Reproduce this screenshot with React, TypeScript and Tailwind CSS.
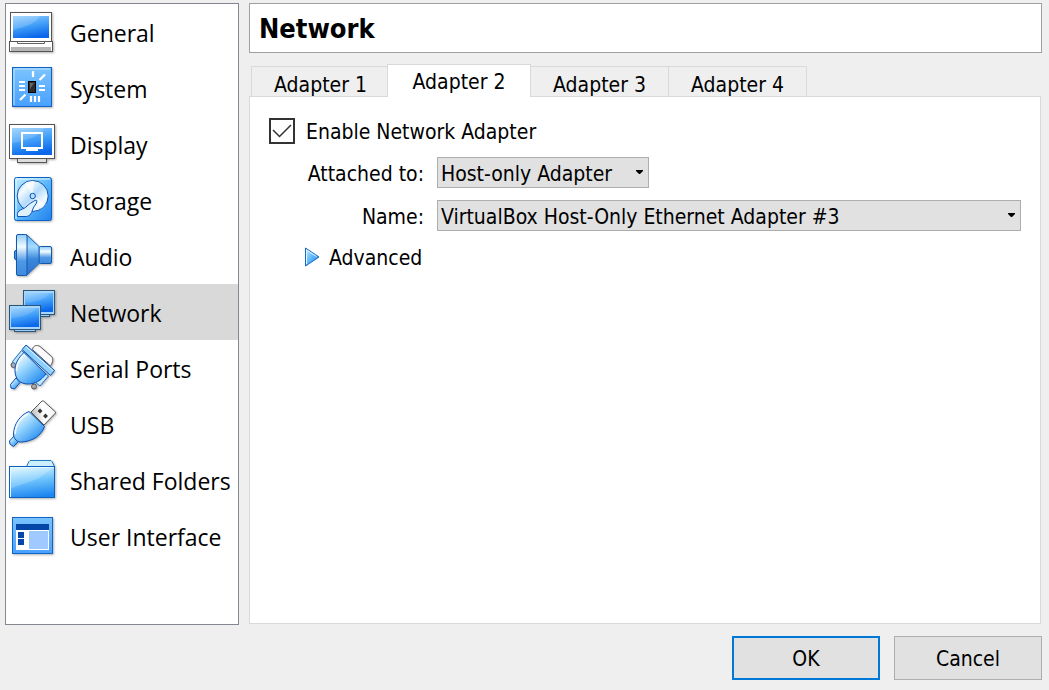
import { useState, type ReactNode } from "react";

function Gradients() {
  return (
    <svg className="absolute h-0 w-0" aria-hidden="true">
      <defs>
        <linearGradient id="screen" x1="0.2" y1="0" x2="0.5" y2="1">
          <stop offset="0" stopColor="#8ccafd" />
          <stop offset="0.5" stopColor="#3f9df8" />
          <stop offset="1" stopColor="#0a66ea" />
        </linearGradient>
        <linearGradient id="panel" x1="0" y1="0" x2="0" y2="1">
          <stop offset="0" stopColor="#7cc4ff" />
          <stop offset="1" stopColor="#49a0ff" />
        </linearGradient>
        <linearGradient id="drive" x1="0" y1="0" x2="1" y2="1">
          <stop offset="0" stopColor="#c4efff" />
          <stop offset="0.5" stopColor="#5cb8fb" />
          <stop offset="1" stopColor="#2080ee" />
        </linearGradient>
        <linearGradient id="platter" x1="0" y1="0" x2="1" y2="1">
          <stop offset="0" stopColor="#9dcdfa" />
          <stop offset="0.25" stopColor="#f4fbff" />
          <stop offset="0.5" stopColor="#b3dafc" />
          <stop offset="0.75" stopColor="#f4fbff" />
          <stop offset="1" stopColor="#8fc6fa" />
        </linearGradient>
        <linearGradient id="speaker" x1="0" y1="0" x2="0" y2="1">
          <stop offset="0" stopColor="#5db4f6" />
          <stop offset="0.3" stopColor="#a8dcff" />
          <stop offset="0.6" stopColor="#3a87dc" />
          <stop offset="1" stopColor="#2f72cc" />
        </linearGradient>
        <linearGradient id="magnet" x1="0" y1="0" x2="0" y2="1">
          <stop offset="0" stopColor="#8fcaf8" />
          <stop offset="0.3" stopColor="#f2fbff" />
          <stop offset="0.65" stopColor="#4d98e6" />
          <stop offset="1" stopColor="#3f8ade" />
        </linearGradient>
        <linearGradient id="plug" x1="0.1" y1="0.2" x2="0.7" y2="0.9">
          <stop offset="0" stopColor="#e8f8ff" />
          <stop offset="0.45" stopColor="#8ed0fd" />
          <stop offset="1" stopColor="#3596f2" />
        </linearGradient>
        <linearGradient id="folder" x1="0.3" y1="0" x2="0.5" y2="1">
          <stop offset="0" stopColor="#d8f5ff" />
          <stop offset="0.45" stopColor="#73c6fd" />
          <stop offset="1" stopColor="#1d86f0" />
        </linearGradient>
        <linearGradient id="metal" x1="0" y1="0.6" x2="1" y2="0.4">
          <stop offset="0" stopColor="#b4b4b4" />
          <stop offset="0.5" stopColor="#ffffff" />
          <stop offset="1" stopColor="#f4f4f4" />
        </linearGradient>
      </defs>
    </svg>
  );
}

function Icon({ children }: { children: ReactNode }) {
  return (
    <svg
      viewBox="0 0 48 48"
      className="size-12 shrink-0 overflow-visible drop-shadow-[1px_1px_1px_rgba(0,0,0,0.3)]"
      aria-hidden="true"
    >
      {children}
    </svg>
  );
}

const GeneralIcon = () => (
  <Icon>
    <rect x="2.5" y="4.5" width="41" height="30" fill="#fff" stroke="#555" />
    <rect x="5" y="8" width="36" height="22" fill="url(#screen)" />
    <path d="M5 8h27C27 16 16 19 5 22z" fill="#fff" opacity=".18" />
    <rect x="1.5" y="33.5" width="43" height="10" fill="#fff" stroke="#555" />
    <path d="M9.500 34v1.500h27V34" fill="none" stroke="#666" />
    <path d="M3 39h40v4H3z" fill="#b5b5b5" />
  </Icon>
);

const SystemIcon = () => (
  <Icon>
    <rect x="4.500" y="3.500" width="39" height="39" fill="url(#panel)" stroke="#1064c8" />
    <path d="M6 41V5h36" fill="none" stroke="#bfe3ff" />
    <path
      d="M25 7v6M31.500 16l5.500-5.500M11 18h6M11 22h6M11 26h6M31 22h6M31 26h6M12 36l5.500-5.500M23 32v6M27 32v6M31 32v6"
      fill="none"
      stroke="#fff"
      strokeWidth="2.2"
    />
    <rect x="20.500" y="17.500" width="7" height="11" fill="#2b2b2b" stroke="#000" />
    <path d="M22 19h4l-4 6z" fill="#666" />
  </Icon>
);

const DisplayIcon = () => (
  <Icon>
    <rect x="9.500" y="38.500" width="29" height="4" fill="#ddd" stroke="#555" />
    <rect x="1.500" y="4.500" width="45" height="34" fill="#fff" stroke="#555" />
    <rect x="4" y="8" width="40" height="27" fill="url(#screen)" />
    <path d="M4 8h33C29 18 17 21 4 23z" fill="#fff" opacity=".15" />
    <rect x="14" y="13" width="20" height="15" fill="none" stroke="#fff" strokeWidth="2" />
    <path d="M18 28h12v3H18z" fill="#fff" />
  </Icon>
);

const StorageIcon = () => (
  <Icon>
    <rect x="6.500" y="1.500" width="37" height="43" rx="2" fill="url(#drive)" stroke="#0c62c4" />
    <path d="M8 43V3h34" fill="none" stroke="#e3f6ff" />
    <circle cx="24.700" cy="20" r="15.500" fill="url(#platter)" stroke="#0c55b4" />
    <path d="M24.700 20L17 7a15 15 0 0 1 9-2zM24.700 20l13 8a15 15 0 0 1-5 5z" fill="#fff" opacity=".6" />
    <circle cx="24.700" cy="20" r="2.700" fill="#b9deff" stroke="#0c55b4" />
    <path
      d="M9.500 40.500c-.5-3 0-4 1.500-5.500 2-2 5-2 7-4 3-3 6-5 10-7 1 0 1 1.500.5 3-2 3-3 4-4 7-1 4-3 6-6 6.500z"
      fill="#dff0ff"
      stroke="#0c55b4"
    />
  </Icon>
);

const AudioIcon = () => (
  <Icon>
    <rect x="6.500" y="18.500" width="4" height="9" rx="1.500" fill="#4594e6" stroke="#1259a8" />
    <rect x="31" y="14.500" width="12.500" height="17" rx="1.500" fill="url(#magnet)" stroke="#1259a8" />
    <path d="M18.500 2.500L31 14.500v17L18.500 43.500z" fill="url(#speaker)" stroke="#1f66b8" />
    <rect x="8.500" y="2.500" width="10.500" height="41" rx="1.500" fill="url(#magnet)" stroke="#1259a8" />
  </Icon>
);

const NetworkIcon = () => (
  <Icon>
    <rect x="26.500" y="26.500" width="15" height="2" fill="#9fd0fa" stroke="#2d5578" />
    <rect x="15.500" y="2.500" width="31" height="24" fill="#a6d5fb" stroke="#2d5578" />
    <rect x="17" y="5" width="28" height="19" fill="url(#screen)" />
    <rect x="6.500" y="41.500" width="21" height="2" fill="#9fd0fa" stroke="#2d5578" />
    <rect x="1.500" y="17.500" width="31" height="24" fill="#a6d5fb" stroke="#2d5578" />
    <rect x="3" y="20" width="28" height="19" fill="url(#screen)" />
    <path d="M17 5h25C37 11 30 14 17 15zM3 20h25C23 26 16 29 3 30z" fill="#fff" opacity=".12" />
  </Icon>
);

const SerialIcon = () => (
  <Icon>
    <path d="M24.500 5.500c.5-4 4.500-5 7.500-3L43.500 12.500c2 2 1.500 5.500-1 9.500z" fill="#fafafa" stroke="#555" />
    <circle cx="5.500" cy="21" r="2.500" fill="#aaa" stroke="#555" />
    <circle cx="26" cy="42.500" r="2.500" fill="#aaa" stroke="#555" />
    <path d="M13.500 6.500l5 4.500L9 21.500l-4.500-4zM36 28l4.500 4L32 42l-5-4z" fill="#bfe5ff" stroke="#1f6dbf" />
    <path d="M8 34l4 4.500L6.500 45l-3.500-1L2.500 40.500z" fill="url(#plug)" stroke="#0c4faf" />
    <path
      d="M16 8.500C10 14 7 20 7 26c0 9 5 14 13 14 7 0 13-3.500 18-10z"
      fill="url(#plug)"
      stroke="#0c4faf"
    />
    <path d="M15.500 11C11 16 8.500 20 8.500 27" fill="none" stroke="#f2fbff" strokeWidth="1.500" />
    <path d="M18 1L46.500 26.500 42.500 31.500 14 5.500z" fill="#8dd0fd" stroke="#0c4faf" />
    <path d="M18 2.700l27 24" stroke="#e2f6ff" />
  </Icon>
);

const UsbIcon = () => (
  <Icon>
    <path d="M34 1h1.500L47.500 12v1L36 25 23 12z" fill="url(#metal)" stroke="#555" />
    <path d="M32 8.500l2.500 2.500-2.500 2.500-2.500-2.500zM37.500 13.500l2.500 2.500-2.500 2.500-2.500-2.500z" fill="#333" />
    <path d="M6 36l4.500 5.500L5.500 46.500 2 44l-.5-3z" fill="url(#plug)" stroke="#0c4faf" />
    <path
      d="M21 11.500C12 15 6 24 5.500 34c0 5 4 8.500 8.500 8C25 41 33 36 36.500 26.500z"
      fill="url(#plug)"
      stroke="#0c4faf"
    />
    <path d="M20.500 13.500C13 17.500 7.500 25 7 34" fill="none" stroke="#f2fbff" strokeWidth="1.500" />
  </Icon>
);

const FolderIcon = () => (
  <Icon>
    <path d="M18.500 10.500l2.500-5 1-1h21l1 1 2.500 5v4h-28z" fill="#cdeffd" stroke="#1f7ac4" />
    <rect x="1.500" y="10.500" width="45" height="31" fill="url(#folder)" stroke="#0f60bc" />
    <path d="M2.500 11.500h43L35 19C25 27 13 27 2.500 33z" fill="#fff" opacity=".2" />
    <path d="M2.500 41V11.500h43" fill="none" stroke="#e4f8ff" />
  </Icon>
);

const InterfaceIcon = () => (
  <Icon>
    <rect x="4.500" y="5.500" width="40" height="36" fill="url(#panel)" stroke="#1064c8" />
    <path d="M8 12h33v26H8z" fill="#fff" />
    <path d="M8 12h33v6H8zM10 20h6v6h-6zM10 27h6v6h-6z" fill="#0447a8" />
    <path d="M21 19h19v18H21z" fill="#9fc9ff" />
  </Icon>
);

const categories = [
  { name: "General", icon: GeneralIcon },
  { name: "System", icon: SystemIcon },
  { name: "Display", icon: DisplayIcon },
  { name: "Storage", icon: StorageIcon },
  { name: "Audio", icon: AudioIcon },
  { name: "Network", icon: NetworkIcon },
  { name: "Serial Ports", icon: SerialIcon },
  { name: "USB", icon: UsbIcon },
  { name: "Shared Folders", icon: FolderIcon },
  { name: "User Interface", icon: InterfaceIcon },
];

const adapters = ["Adapter 1", "Adapter 2", "Adapter 3", "Adapter 4"];

function Select({ id, value }: { id: string; value: string }) {
  return (
    <div className="relative">
      <select
        id={id}
        className="block h-[31px] w-full appearance-none border border-[#adadad] bg-[#e1e1e1] pt-0.5 pr-6 pl-[3px] leading-7"
      >
        <option>{value}</option>
      </select>
      <svg viewBox="0 0 7 4" className="pointer-events-none absolute top-[13px] right-[6px] h-1 w-[7px]" aria-hidden="true">
        <path d="M0 0h7v1L4 4H3L0 1z" />
      </svg>
    </div>
  );
}

export default function App() {
  const [category, setCategory] = useState("Network");
  const [adapter, setAdapter] = useState("Adapter 2");
  const [enabled, setEnabled] = useState(true);

  return (
    <div className="flex min-h-screen flex-col gap-[11px] bg-[#efefef] pt-[3px] pr-[7px] pb-[10px] pl-[5px] font-['DejaVu_Sans_Condensed','Noto_Sans',sans-serif] text-[21px] leading-7 text-black">
      <Gradients />
      <div className="flex flex-1 gap-[10px]">
        <nav className="w-[234px] shrink-0 border border-[#828790] bg-white font-['Open_Sans','Noto_Sans',sans-serif] text-[23px]">
          {categories.map(({ name, icon: CategoryIcon }) => (
            <button
              key={name}
              type="button"
              onClick={() => setCategory(name)}
              className={`flex h-14 w-full items-center gap-[14px] pl-[2px] text-left whitespace-nowrap ${
                category === name ? "bg-[#d9d9d9]" : "bg-white"
              }`}
            >
              <CategoryIcon />
              <span className="pt-0.5">{name}</span>
            </button>
          ))}
        </nav>

        <main className="flex min-w-0 flex-1 flex-col">
          <h1 className="flex h-[50px] items-center border border-[#a0a0a0] bg-white px-[9px] pt-0.5 text-[27px] font-bold">
            {category}
          </h1>

          <div className="mt-[11px] flex items-end pl-[2px]" role="tablist">
            {adapters.map((name) => (
              <button
                key={name}
                type="button"
                role="tab"
                aria-selected={adapter === name}
                onClick={() => setAdapter(name)}
                className={`-mr-px border border-b-0 border-[#d9d9d9] whitespace-nowrap ${
                  adapter === name
                    ? "z-10 -mb-px -ml-0.5 h-[33px] w-36 bg-white pt-0.5"
                    : "h-[30px] w-[139px] bg-[#efefef] pt-1"
                }`}
              >
                {name}
              </button>
            ))}
          </div>

          <section className="mr-px mb-px flex-1 border border-[#d9d9d9] bg-white px-[19px] pt-[19px]" role="tabpanel">
            <label className="relative flex w-fit items-center gap-[11px]">
              <input
                type="checkbox"
                checked={enabled}
                onChange={() => setEnabled(!enabled)}
                className="size-[26px] appearance-none border-2 border-[#333] bg-white"
              />
              {enabled && (
                <svg
                  viewBox="0 0 26 26"
                  className="pointer-events-none absolute left-0 size-[26px]"
                  aria-hidden="true"
                >
                  <path d="M4 12l6.500 6.500L22 7" fill="none" stroke="#333" strokeWidth="1.500" />
                </svg>
              )}
              <span className="pt-0.5">Enable Network Adapter</span>
            </label>

            <div className="mt-[11px] grid grid-cols-[155px_1fr] items-center gap-x-[13px] gap-y-3">
              <label htmlFor="attached" className="pt-0.5 text-right">
                Attached to:
              </label>
              <div className="w-[212px]">
                <Select id="attached" value="Host-only Adapter" />
              </div>
              <label htmlFor="name" className="pt-0.5 text-right">
                Name:
              </label>
              <Select id="name" value="VirtualBox Host-Only Ethernet Adapter #3" />
            </div>

            <button type="button" className="mt-[11px] ml-[35px] flex items-center gap-2">
              <svg viewBox="0 0 17 20" className="h-5 w-[17px]" aria-hidden="true">
                <path d="M1.500 1v18L15 10z" fill="url(#drive)" stroke="#1a66b8" strokeLinejoin="round" />
                <path d="M2.500 17V3l10 6.500" fill="none" stroke="#e4f7ff" />
              </svg>
              <span className="pt-0.5">Advanced</span>
            </button>
          </section>
        </main>
      </div>

      <footer className="flex justify-end gap-[14px]">
        <button type="button" className="h-11 w-[148px] border-2 border-[#0078d7] bg-[#e1e1e1] pt-0.5">
          OK
        </button>
        <button type="button" className="h-11 w-[148px] border border-[#adadad] bg-[#e1e1e1] pt-0.5">
          Cancel
        </button>
      </footer>
    </div>
  );
}
